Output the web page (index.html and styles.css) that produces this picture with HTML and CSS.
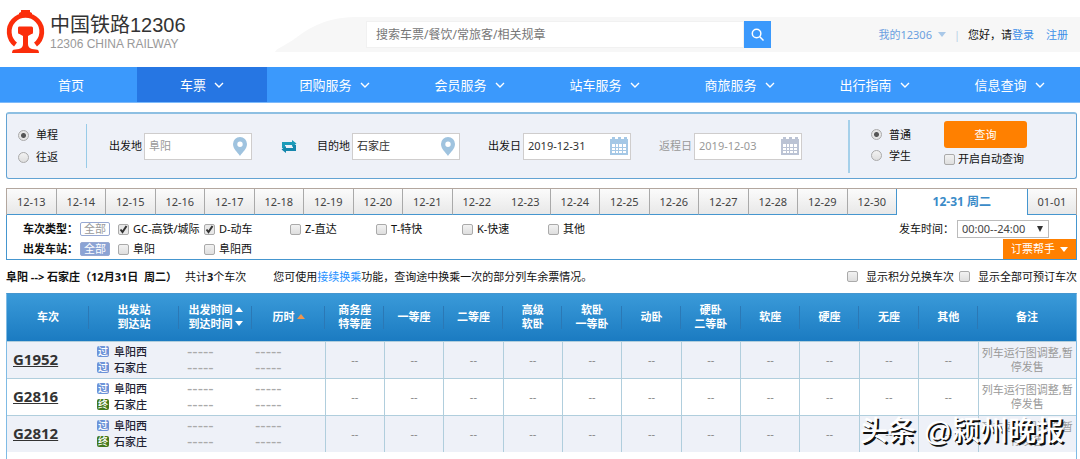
FILE: index.html
```html
<!DOCTYPE html>
<html lang="zh-CN">
<head>
<meta charset="utf-8">
<title>中国铁路12306</title>
<link rel="stylesheet" href="styles.css">
</head>
<body>
<svg class="defs" aria-hidden="true">
  <symbol id="chev" viewBox="0 0 10 6"><path d="M1 1l4 4 4-4" fill="none" stroke="currentColor" stroke-width="1.4"/></symbol>
  <symbol id="pin" viewBox="0 0 14 19"><path fill="#9fc3df" fill-rule="evenodd" d="M7 0a7 7 0 0 1 7 7c0 5-4.500 8-7 12C4.500 15 0 12 0 7a7 7 0 0 1 7-7zm0 4.500a2.700 2.700 0 1 0 0 5.400 2.700 2.700 0 0 0 0-5.400z"/></symbol>
  <symbol id="cal" viewBox="0 0 18 18"><path fill="currentColor" fill-rule="evenodd" d="M0 2h2V0h3v2h3V0h3v2h3V0h3v2h1v16H0zm2 5v3h3V7zm4 0v3h2V7zm3 0v3h3V7zm4 0v3h3V7zM2 11v2h3v-2zm4 0v2h2v-2zm3 0v2h3v-2zm4 0v2h3v-2zM2 14v2h3v-2zm4 0v2h2v-2zm3 0v2h3v-2zm4 0v2h3v-2z"/></symbol>
</svg>

<header class="header">
  <a class="logo" href="#">
    <svg class="logo-mark" viewBox="0 0 40 44" aria-hidden="true">
      <path d="M9.500 34.500A16.300 16.300 0 1 1 29.500 34.500" fill="none" stroke="#fb2d0b" stroke-width="4.800"/>
      <path fill="#fb2d0b" d="M15 0h9v2l2 1v3H13V3l2-1zM13 16.500h12.500q1.500 0 1.500 1.500v4.500q0 1.500-1.500 1.500L22 26v8q0 4 4 5l5.500.800q1.500.4 1.500 3.200H6q0-2.800 1.500-3.200L13 39q4-1 4-5v-8l-3.500-2Q12 24 12 22.500V18q0-1.500 1-1.500z"/>
    </svg>
    <span class="logo-text"><span class="logo-name">中国铁路12306</span><span class="logo-sub">12306 CHINA RAILWAY</span></span>
  </a>
  <svg class="curve" viewBox="0 0 90 35" preserveAspectRatio="none" aria-hidden="true"><path fill="#f7f7f7" d="M0 35C2 31 12 28 22 21 42 7 58 0 90 0v35z"/></svg>
  <div class="band">
    <form class="search">
      <input class="search-input" type="text" aria-label="搜索" placeholder="搜索车票/餐饮/常旅客/相关规章">
      <button class="search-btn" type="button" aria-label="搜索"><svg viewBox="0 0 14 14"><circle cx="6" cy="6" r="4.600"/><path d="M9.500 9.500l4 4"/></svg></button>
    </form>
    <div class="user">
      <a class="mine" href="#">我的12306 <i class="tri tri-pale"></i></a>
      <span class="bar">|</span>
      <span>您好，请<a href="#">登录</a></span>
      <a class="reg" href="#">注册</a>
    </div>
  </div>
</header>

<nav class="nav">
  <a class="home" href="#">首页</a>
  <a class="on" href="#">车票<svg><use href="#chev"/></svg></a>
  <a href="#">团购服务<svg><use href="#chev"/></svg></a>
  <a href="#">会员服务<svg><use href="#chev"/></svg></a>
  <a href="#">站车服务<svg><use href="#chev"/></svg></a>
  <a href="#">商旅服务<svg><use href="#chev"/></svg></a>
  <a href="#">出行指南<svg><use href="#chev"/></svg></a>
  <a href="#">信息查询<svg><use href="#chev"/></svg></a>
</nav>

<main class="main">
  <form class="query">
    <div class="radios trip">
      <label><input type="radio" name="trip" checked>单程</label>
      <label><input type="radio" name="trip">往返</label>
    </div>
    <div class="fields">
      <div class="field"><label for="from">出发地</label><span class="box"><input class="hint" id="from" type="text" value="阜阳"><svg class="pin"><use href="#pin"/></svg></span></div>
      <button class="swap" type="button" aria-label="交换"><svg viewBox="0 0 16 13"><path fill="#1c9bb9" d="M1 2h10V0l4.500 3.500L11 7V5H4v3H1z"/><path fill="#1587ad" d="M15 11H5v2L.5 9.500 5 6v2h7V5h3z"/></svg></button>
      <div class="field"><label for="to">目的地</label><span class="box"><input id="to" type="text" value="石家庄"><svg class="pin"><use href="#pin"/></svg></span></div>
      <div class="field depart"><label for="d1">出发日</label><span class="box"><input id="d1" type="text" value="2019-12-31"><svg class="cal"><use href="#cal"/></svg></span></div>
      <div class="field back"><label for="d2">返程日</label><span class="box"><input class="hint" id="d2" type="text" value="2019-12-03"><svg class="cal"><use href="#cal"/></svg></span></div>
    </div>
    <div class="radios kind">
      <label><input type="radio" name="kind" checked>普通</label>
      <label><input type="radio" name="kind">学生</label>
    </div>
    <div class="submit">
      <button type="button">查询</button>
      <label><input type="checkbox">开启自动查询</label>
    </div>
  </form>

  <div class="dates">
    <button type="button">12-13</button><button type="button">12-14</button><button type="button">12-15</button><button type="button">12-16</button><button type="button">12-17</button><button type="button">12-18</button><button type="button">12-19</button><button type="button">12-20</button><button type="button">12-21</button><button type="button">12-22</button><button class="joined" type="button">12-23</button><button type="button">12-24</button><button type="button">12-25</button><button type="button">12-26</button><button type="button">12-27</button><button type="button">12-28</button><button type="button">12-29</button><button type="button">12-30</button><button class="current" type="button">12-31 周二</button><button type="button">01-01</button>
  </div>

  <section class="filters">
    <div class="frow">
      <b>车次类型：</b><button class="all" type="button">全部</button>
      <div class="opts">
        <label><input type="checkbox" checked>GC-高铁/城际</label>
        <label><input type="checkbox" checked>D-动车</label>
        <label><input type="checkbox">Z-直达</label>
        <label><input type="checkbox">T-特快</label>
        <label><input type="checkbox">K-快速</label>
        <label><input type="checkbox">其他</label>
      </div>
      <label class="time">发车时间：<select><option>00:00--24:00</option></select></label>
    </div>
    <div class="frow">
      <b>出发车站：</b><button class="all picked" type="button">全部</button>
      <div class="opts">
        <label><input type="checkbox">阜阳</label>
        <label><input type="checkbox">阜阳西</label>
      </div>
      <button class="helper" type="button">订票帮手<i class="tri"></i></button>
    </div>
  </section>

  <div class="summary">
    <b class="route">阜阳 --&gt; 石家庄（12月31日&nbsp; 周二）</b>
    <span>共计<b>3</b>个车次</span>
    <span class="tip">您可使用<a href="#">接续换乘</a>功能，查询途中换乘一次的部分列车余票情况。</span>
    <label><input type="checkbox">显示积分兑换车次</label>
    <label><input type="checkbox">显示全部可预订车次</label>
  </div>

  <div class="result">
    <table>
      <colgroup><col class="c-no"><col class="c-st"><col class="c-tm"><col class="c-tm"><col span="11"><col class="c-rm"></colgroup>
      <thead>
        <tr><th>车次</th><th>出发站<br>到达站</th><th class="sort">出发时间<i class="tri up"></i><br>到达时间<i class="tri"></i></th><th>历时<i class="tri up hot"></i></th><th>商务座<br>特等座</th><th>一等座</th><th>二等座</th><th>高级<br>软卧</th><th>软卧<br>一等卧</th><th>动卧</th><th>硬卧<br>二等卧</th><th>软座</th><th>硬座</th><th>无座</th><th>其他</th><th>备注</th></tr>
      </thead>
      <tbody>
        <tr><td class="no"><a href="#">G1952</a></td><td class="st"><div><i>过</i>阜阳西</div><div><i>过</i>石家庄</div></td><td class="tm">-----<br>-----</td><td class="tm last">-----<br>-----</td><td>--</td><td>--</td><td>--</td><td>--</td><td>--</td><td>--</td><td>--</td><td>--</td><td>--</td><td>--</td><td>--</td><td class="rm">列车运行图调整,暂停发售</td></tr>
        <tr><td class="no"><a href="#">G2816</a></td><td class="st"><div><i>过</i>阜阳西</div><div><i class="end">终</i>石家庄</div></td><td class="tm">-----<br>-----</td><td class="tm last">-----<br>-----</td><td>--</td><td>--</td><td>--</td><td>--</td><td>--</td><td>--</td><td>--</td><td>--</td><td>--</td><td>--</td><td>--</td><td class="rm">列车运行图调整,暂停发售</td></tr>
        <tr><td class="no"><a href="#">G2812</a></td><td class="st"><div><i>过</i>阜阳西</div><div><i class="end">终</i>石家庄</div></td><td class="tm">-----<br>-----</td><td class="tm last">-----<br>-----</td><td>--</td><td>--</td><td>--</td><td>--</td><td>--</td><td>--</td><td>--</td><td>--</td><td>--</td><td>--</td><td>--</td><td class="rm">列车运行图调整,暂停发售</td></tr>
      </tbody>
    </table>
    <div class="watermark">头条 @颍州晚报</div>
  </div>
</main>
</body>
</html>
```

FILE: styles.css
```css
* { box-sizing: border-box; }
body {
  margin: 0;
  background: #fff;
  color: #111;
  font: 11px/16px "Noto Sans", "Noto Sans CJK SC", sans-serif;
}
a { color: #3b8ee8; text-decoration: none; }
i { font-style: normal; }
button, input, select { font: inherit; color: inherit; margin: 0; }
button { border: 0; padding: 0; cursor: pointer; }
.defs { display: none; }

input[type="radio"], input[type="checkbox"] {
  appearance: none;
  flex: none;
  width: 11px;
  height: 11px;
  border: 1px solid #aaa;
  background: linear-gradient(#f2f2f2, #dedede);
}
input[type="radio"] { border-radius: 50%; }
input[type="radio"]:checked { background: radial-gradient(circle, #555 0 2px, #e6e6e6 3px); }
input[type="checkbox"] { border-radius: 2px; }
input[type="checkbox"]:checked {
  background: #e8e8e8 url('data:image/svg+xml,<svg xmlns="http://www.w3.org/2000/svg" viewBox="0 0 9 9"><path d="M1.500 4.500l2 2.500 4-6" fill="none" stroke="%23333" stroke-width="2"/></svg>') center / 9px no-repeat;
}
label { display: flex; align-items: center; white-space: nowrap; }

.tri {
  display: inline-block;
  border: 4px solid transparent;
  border-top: 5px solid #fff;
  border-bottom: 0;
}
.tri.up { border-top: 0; border-bottom: 5px solid #fff; }
.tri.hot { border-bottom-color: #ee9550; }
.tri-pale { border-top-color: #a9c8e8; margin-left: 6px; }

/* Header */
.header { display: flex; align-items: center; height: 67px; }
.logo { display: flex; align-items: center; width: 275px; padding-left: 6px; padding-bottom: 3px; }
.logo-mark { width: 40px; height: 44px; margin-right: 4px; }
.logo-text { display: flex; flex-direction: column; font-family: "Liberation Sans", "Noto Sans CJK SC", sans-serif; }
.logo-name { font-size: 20px; line-height: 24px; color: #333; }
.logo-sub { font-size: 12px; line-height: 14px; color: #999; }
.curve { width: 85px; height: 35px; margin-top: 2px; }
.band {
  flex: 1;
  display: flex;
  align-items: center;
  justify-content: space-between;
  height: 35px;
  margin-top: 2px;
  padding: 0 12px 0 6px;
  background: #f7f7f7;
}
.search { display: flex; flex: 0 0 405px; }
.search-input { flex: 1; height: 27px; border: 1px solid #f1f1f1; padding: 0 9px; background: #fff; font-size: 12px; }
.search-input::placeholder { color: #777; }
.search-btn { display: grid; place-items: center; width: 27px; height: 27px; background: #3b99fc; }
.search-btn svg { width: 13px; height: 13px; fill: none; stroke: #fff; stroke-width: 1.6; }
.user { display: flex; align-items: center; }
.mine { display: flex; align-items: center; color: #6b9fe0; }
.bar { color: #b8cfe6; margin: 0 8px; }
.reg { margin-left: 12px; }

/* Main navigation */
.nav { display: flex; height: 36px; background: #3b99fc; border-bottom: 1px solid #7dbafb; padding-right: 3px; }
.nav a {
  flex: 135 1 0;
  display: flex;
  align-items: center;
  justify-content: center;
  gap: 8px;
  color: #fff;
  font-size: 13px;
}
.nav .home { flex-grow: 137; text-indent: 5px; }
.nav .on { flex-grow: 130; background: #2676e3; }
.nav svg { width: 10px; height: 6px; }

.main { padding: 9px 3px 0 6px; }

/* Ticket query form */
.query {
  display: flex;
  align-items: center;
  height: 67px;
  border: 1px solid #62a3d3;
  border-top: 2px solid #8dbfe2;
  border-radius: 3px;
  background: #eef1f8;
}
.radios { display: flex; flex-direction: column; }
.radios label { gap: 7px; }
.trip { gap: 6px; padding: 3px 28px 3px 11px; border-right: 1px solid #98cbe8; }
.kind { gap: 5px; padding: 7px 33px 9px 21px; border-left: 2px solid #a5d0ea; }
.fields { flex: 1; display: flex; align-items: center; padding-left: 22px; }
.field { display: flex; align-items: center; gap: 2px; }
.box {
  display: flex;
  align-items: center;
  width: 108px;
  height: 27px;
  padding: 0 4px;
  border: 1px solid #cfcdcd;
  background: #fff;
}
.box input { flex: 1; width: 60px; border: 0; padding: 0; background: none; color: #333; outline: 0; }
.box .hint { color: #999; }
.pin { width: 14px; height: 19px; }
.cal { width: 18px; height: 18px; color: #a5c8e6; margin-right: -2px; }
.swap { background: none; margin: 0 20px 0 29px; height: 13px; }
.swap svg { width: 16px; height: 13px; display: block; }
.depart, .back { margin-left: 28px; }
.back { color: #999; }
.back .cal { color: #bbc3d4; }
.submit { width: 132px; padding-bottom: 4px; display: flex; flex-direction: column; gap: 3px; }
.submit button { width: 83px; height: 27px; border-radius: 3px; background: #ff8000; color: #fff; }
.submit label { gap: 3px; }

/* Date tabs */
.dates { display: flex; height: 27px; margin-top: 9px; border: 1px solid #b3a79f; border-bottom: 0; }
.dates button {
  flex: 49 1 0;
  border-left: 1px solid #a9a9a9;
  border-bottom: 1px solid #4596cf;
  background: linear-gradient(#fbfbfb, #e8e8e8);
  color: #444;
}
.dates button:first-child, .dates .joined { border-left: 0; }
.dates .current {
  flex-grow: 131;
  background: #fff;
  border: 1px solid #4596cf;
  border-width: 0 1px;
  color: #3a8bc8;
  font-size: 12px;
  font-weight: 700;
}
.dates .current + button { border-left: 0; }

/* Filters */
.filters { border: 1px solid #4596cf; border-top: 0; padding: 4px 0 0 16px; }
.frow { display: flex; align-items: center; height: 20px; }
.frow b { width: 57px; white-space: nowrap; }
.all { width: 30px; height: 14px; line-height: 12px; border: 1px solid #97a8d2; border-radius: 2px; background: #fff; color: #999; }
.picked { background: #8ba3d4; color: #fff; }
.opts { flex: 1; display: grid; grid-template-columns: repeat(6, 86px); margin-left: 8px; }
.opts label { gap: 4px; }
.time { margin-right: 27px; }
.time select {
  appearance: none;
  width: 92px;
  height: 18px;
  margin-left: 3px;
  padding: 0 4px;
  border: 1px solid #bbb;
  color: #444;
  background: #fff url('data:image/svg+xml,<svg xmlns="http://www.w3.org/2000/svg" viewBox="0 0 6 6"><path d="M0 0h6L3 6z" fill="%23333"/></svg>') right 5px center / 6px no-repeat;
}
.helper { display: flex; align-items: center; justify-content: center; gap: 5px; width: 73px; height: 20px; background: #ff8000; color: #fff; }

.summary { display: flex; align-items: center; height: 33px; white-space: nowrap; }
.route { width: 179px; }
.tip { flex: 1; margin-left: 27px; }
.tip a { color: #1e90ff; }
.summary label { gap: 8px; margin-left: 5px; }

/* Result table */
.result { position: relative; border: 1px solid #7fbbe5; border-top-color: #4596cf; border-bottom: 0; min-height: 168px; }
table { width: 100%; table-layout: fixed; border-collapse: collapse; }
.c-no { width: 82px; }
.c-st { width: 90px; }
.c-tm { width: 73px; }
.c-rm { width: 98px; }
thead tr { height: 47px; background: linear-gradient(#3a9ad9, #1b7bc1); }
th {
  padding: 0;
  color: #fff;
  line-height: 14px;
  background: linear-gradient(#2b78b5, #2b78b5) right center / 1px 23px no-repeat;
}
th:last-child { background: none; }
th .tri { margin: 0 0 2px 2px; }
tbody tr { height: 37px; border-top: 1px solid #b0cedd; background: #fff; }
tbody tr:nth-child(odd) { background: #eef1f8; }
td { padding: 0; text-align: center; color: #888; border-left: 1px solid #b0cedd; }
td:nth-child(-n+4) { border-left: 0; }
.no { text-align: left; padding-left: 6px; }
.no a { color: #333; font-size: 15px; font-weight: 700; text-decoration: underline; }
.st { color: #223; font-weight: 500; }
.st div { display: flex; align-items: center; gap: 5px; padding-left: 8px; }
.st i { width: 12px; height: 11px; border-radius: 2px; background: #6d93d8; color: #fff; font-size: 10px; line-height: 11px; }
.st .end { background: #44781c; }
.tm { text-align: left; padding-left: 8px; font: 16px/16px "Liberation Sans", sans-serif; color: #aaa; }
.tm.last { padding-left: 3px; }
.rm { color: #999; line-height: 14px; }

.watermark {
  position: absolute;
  right: 12px;
  top: 118px;
  font: 500 28px/40px "Liberation Sans", "Noto Sans CJK SC", sans-serif;
  color: #fff;
  text-shadow: 2px 2px 0 #111;
  white-space: nowrap;
}
```
